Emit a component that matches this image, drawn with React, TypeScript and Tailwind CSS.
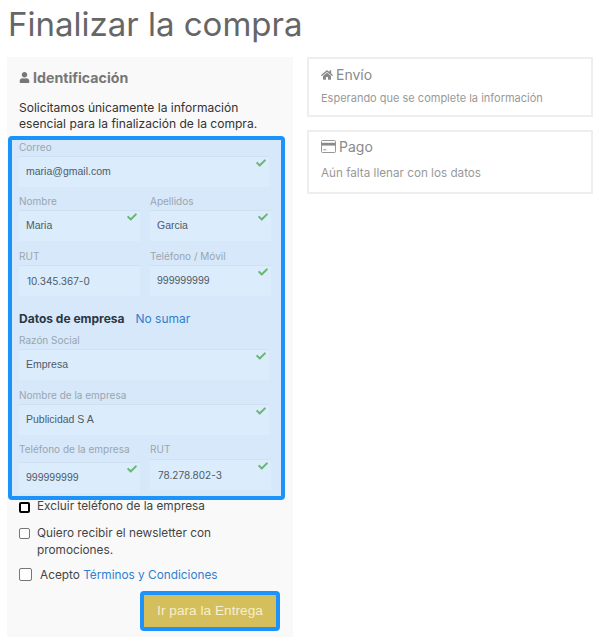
import { FaCheck, FaUser, FaHome } from "react-icons/fa";

const font = { fontFamily: '"Inter", "Open Sans", sans-serif' };
const helvetica = { fontFamily: '"Liberation Sans", sans-serif' };

function Field({ label, value, check = true, inputClass = "", rut = false }: { label: string; value: string; check?: boolean; inputClass?: string; rut?: boolean }) {
    return (
        <div className="w-full">
            <div className="h-[16px] text-[10px] leading-[14px] text-[#9aa5b1]">{label}</div>
            <div
                className={`relative flex h-[31px] items-center border-t border-[#cfe0f0] bg-[#dbecfd] text-[#4f5b66] ${rut ? "pl-[8px] text-[10px]" : "pl-[7px] text-[10.5px]"} ${inputClass}`}
                style={rut ? undefined : helvetica}
            >
                {value}
                {check && <FaCheck className="absolute right-[3px] top-[1px] text-[10px] text-[#6bb573]" />}
            </div>
        </div>
    );
}

function Check({ focused = false, size = "h-[11px] w-[11px]" }: { focused?: boolean; size?: string }) {
    return (
        <span className={`inline-block shrink-0 rounded-[2px] bg-white ${size} ${focused ? "border-2 border-black" : "border border-[#767676]"}`} />
    );
}

function Side({ title, icon, text, className, textClass }: { title: string; icon: React.ReactNode; text: string; className: string; textClass: string }) {
    return (
        <div className={`border-2 border-[#eeeeee] bg-white pl-[12px] ${className}`}>
            <div className="flex items-center gap-[3px] text-[14px] text-[#8a8a8a]">{icon}{title}</div>
            <div className={`text-[#999999] ${textClass}`}>{text}</div>
        </div>
    );
}

export default function App() {
    return (
        <div className="h-[637px] w-[600px] overflow-hidden bg-white pl-[7px]" style={font}>
            <h1 className="h-[57px] pl-[1px] text-[33px] leading-[48px] text-[#666666]">Finalizar la compra</h1>
            <div className="flex gap-[14px]">
                <div className="h-[580px] w-[286px] bg-[#f9f9f9]">
                    <div className="flex h-[79px] flex-col pl-[12px]">
                        <div className="mt-[10px] flex items-center gap-[3px] text-[14.2px] font-bold text-[#777777]">
                            <FaUser className="text-[11px]" />
                            Identificación
                        </div>
                        <p className="mt-[12px] text-[12.05px] leading-[16px] text-[#333333]">
                            Solicitamos únicamente la información<br />esencial para la finalización de la compra.
                        </p>
                    </div>
                    <div className="ml-[1px] h-[364px] w-[277px] rounded-[4px] border-4 border-[#1c92fb] bg-[#d6e8f9] pl-[7px]">
                        <div className="w-[250px]">
                            <Field label="Correo" value="maria@gmail.com" />
                        </div>
                        <div className="mt-[7px] flex w-[252px] gap-[10px]">
                            <Field label="Nombre" value="Maria" />
                            <Field label="Apellidos" value="Garcia" />
                        </div>
                        <div className="mt-[8px] flex w-[252px] gap-[10px]">
                            <Field label="RUT" value="10.345.367-0" check={false} rut />
                            <Field label="Teléfono / Móvil" value="999999999" />
                        </div>
                        <div className="mt-[12px] flex h-[22px] items-center gap-[11px] text-[12px]">
                            <span className="font-bold text-[#2a3644]">Datos de empresa</span>
                            <span className="text-[#2f80d0]">No sumar</span>
                        </div>
                        <div className="mt-[3px] w-[250px]">
                            <Field label="Razón Social" value="Empresa" />
                            <div className="mt-[8px]">
                                <Field label="Nombre de la empresa" value="Publicidad S A" />
                            </div>
                        </div>
                        <div className="mt-[7px] flex w-[252px] gap-[10px]">
                            <Field label="Teléfono de la empresa" value="999999999" inputClass="mt-[4px]" />
                            <Field label="RUT" value="78.278.802-3" inputClass="mt-[1px]" rut />
                        </div>
                    </div>
                    <div className="pl-[12px] text-[11.8px] text-[#444444]">
                        <div className="flex h-[14px] items-center gap-[7px]">
                            <Check focused />
                            Excluir teléfono de la empresa
                        </div>
                        <div className="mt-[11px] flex gap-[7px] leading-[17px]">
                            <span className="pt-[2px]"><Check /></span>
                            <span>Quiero recibir el newsletter con<br />promociones.</span>
                        </div>
                        <div className="mt-[9px] flex h-[16px] items-center gap-[8px]">
                            <span className="-mt-[3px] flex"><Check size="h-[13px] w-[13px]" /></span>
                            <span>Acepto <span className="text-[#2f80d0]">Términos y Condiciones</span></span>
                        </div>
                    </div>
                    <div className="mt-[7px] flex justify-end pr-[13px]">
                        <button className="h-[40px] w-[140px] rounded-[4px] border-4 border-[#1c92fb] bg-[#d4bf5c] text-[13.7px] text-[#f5efcf]" style={helvetica}>
                            Ir para la Entrega
                        </button>
                    </div>
                </div>
                <div className="w-[286px]">
                    <Side title="Envío" text="Esperando que se complete la información" className="h-[60px] pt-[5px]" textClass="mt-[5px] text-[11px]" icon={<FaHome className="text-[12px]" />} />
                    <div className="mt-[13px]">
                        <Side title="Pago" text="Aún falta llenar con los datos" className="h-[64px] pt-[4px]" textClass="mt-[8px] text-[11.7px]" icon={
                            <svg viewBox="0 0 16 14" className="h-[13px] w-[15px]" fill="none"><rect x="0.5" y="0.5" width="15" height="13" rx="1" stroke="#8a8a8a" /><rect x="0.5" y="3" width="15" height="3" fill="#8a8a8a" /><path d="M2.5 10.5h3" stroke="#8a8a8a" /></svg>
                        } />
                    </div>
                </div>
            </div>
        </div>
    );
}
